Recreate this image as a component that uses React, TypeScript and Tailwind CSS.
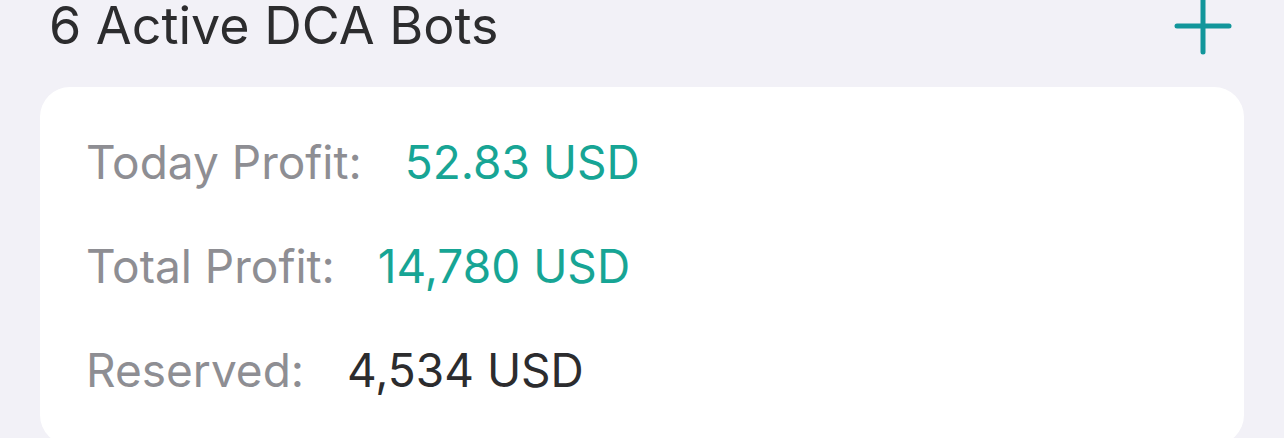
import React from "react"

const rows = [
  { label: "Today Profit:", value: "52.83 USD", accent: true },
  { label: "Total Profit:", value: "14,780 USD", accent: true },
  { label: "Reserved:", value: "4,534 USD", accent: false },
]

function PlusIcon() {
  return (
    <svg width="58" height="58" viewBox="0 0 58 58" className="-mt-[3px] shrink-0">
      <line x1="3" y1="29" x2="55" y2="29" stroke="#12969b" strokeWidth="5" strokeLinecap="round" />
      <line x1="29" y1="3" x2="29" y2="55" stroke="#12969b" strokeWidth="5" strokeLinecap="round" />
    </svg>
  )
}

export default function App() {
  return (
    <div
      className="h-[438px] w-full overflow-hidden bg-[#f2f1f7]"
      style={{ fontFamily: "Inter, Roboto, 'Liberation Sans', sans-serif" }}
    >
      {/* Header */}
      <div className="flex h-[87px] items-start justify-between pl-[49px] pr-[52px]">
        <h1 className="text-[52px] leading-[52px] text-[#2c2c2e]">6 Active DCA Bots</h1>
        <PlusIcon />
      </div>

      {/* Summary card */}
      <div className="mx-[40px] h-[358px] rounded-[30px] bg-white pl-[46px] pt-[23px]">
        {rows.map((row) => (
          <div key={row.label} className="flex h-[104px] items-baseline gap-[43px] text-[46px] leading-[104px]">
            <span className="text-[#8e8e93]">{row.label}</span>
            <span className={row.accent ? "text-[#17a595]" : "text-[#2c2c2e]"}>{row.value}</span>
          </div>
        ))}
      </div>
    </div>
  )
}
